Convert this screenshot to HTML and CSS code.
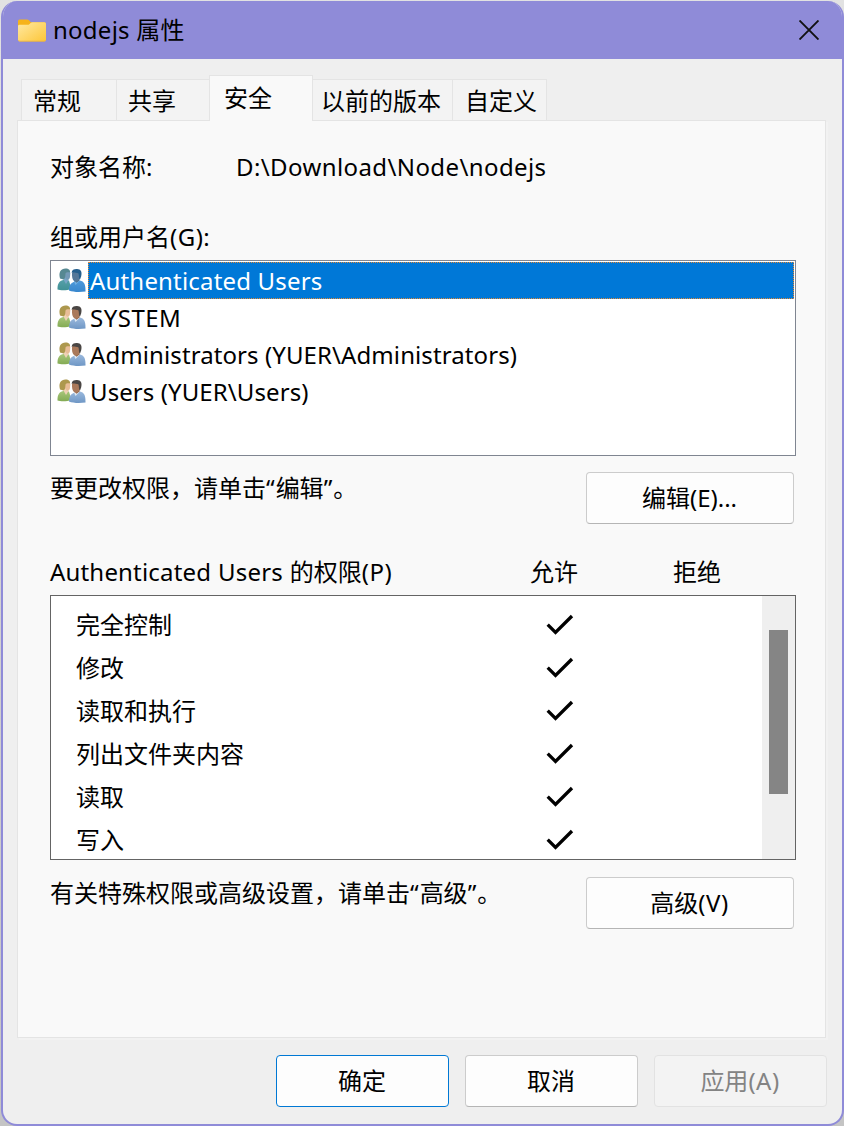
FILE: index.html
```html
<!DOCTYPE html>
<html lang="zh-CN">
<head>
<meta charset="utf-8">
<title>nodejs 属性</title>
<link rel="stylesheet" href="styles.css">
</head>
<body>
<svg class="defs" width="0" height="0">
  <defs>
    <filter id="selection-tint" color-interpolation-filters="sRGB"><feColorMatrix values=".5 0 0 0 0  0 .5 0 0 .235  0 0 .5 0 .42  0 0 0 1 0"/></filter>
    <linearGradient id="folder-front" x1="0" y1="0" x2="1" y2="1"><stop offset="0" stop-color="#ffe9a3"/><stop offset="1" stop-color="#fdc638"/></linearGradient>
    <linearGradient id="blue-coat" x1="0" y1="0" x2="0" y2="1"><stop offset="0" stop-color="#9bb9dd"/><stop offset="1" stop-color="#6f97c5"/></linearGradient>
    <linearGradient id="green-coat" x1="0" y1="0" x2="0" y2="1"><stop offset="0" stop-color="#a9c77c"/><stop offset="1" stop-color="#83ab54"/></linearGradient>
    <symbol id="people" viewBox="0 0 29 25">
      <path d="M.5 20.500C.5 15 2.500 12.800 7 11.700L12 12.500 14.500 21C10 22.600 3.500 22.600.5 21.500Z" fill="url(#green-coat)"/>
      <path d="M6.500 11.500 9 16 11.500 12 11 8H7Z" fill="#efd2b5"/>
      <path d="M7 4C8 1.800 13 2 13.300 5L13 9C12.500 11.500 11 12.200 9.500 11.300L7 8Z" fill="#e8bd98"/>
      <path d="M3 10.500C1.300 4 4 .6 8.500.6 11.500.5 13.500 2.300 13 4.300 11 4.300 9.500 3.800 8.500 5.500 8.300 8 8.500 10.300 6.500 11.500Z" fill="#ad984e"/>
      <path d="M12 22.500C12 17.500 13.800 14.800 18 13.500L23 12.500C27 13.500 28.600 16 28.500 23.500 22 24.400 16 24 12 22.500Z" fill="url(#blue-coat)"/>
      <path d="M17 13.500 18.500 17 22 13.500 22 10H18Z" fill="#dfe8f2"/>
      <path d="M18 13 19.500 14.700 22.500 12.500V9H18Z" fill="#916345"/>
      <path d="M15 5C15.500 2.500 22 2 23 5V9.500C22 13.500 19 14.600 17 13 15.500 12 14.700 8.500 15 5Z" fill="#aa795b"/>
      <path d="M14.600 4.800C14.800 2 17 1 20 1.100 24 1.200 25.300 4 24.200 8.300L23 11.500C21.500 10.500 22.300 7 21.300 5.200 19 5 16.500 3.800 14.600 4.800Z" fill="#4a4644"/>
    </symbol>
    <symbol id="tick" viewBox="0 0 28 22"><path d="M1.700 10.700 9.500 18.500 26 2" fill="none" stroke="#000" stroke-width="3.300"/></symbol>
  </defs>
</svg>
<main class="window">
  <header class="titlebar">
    <svg class="folder" width="28" height="23" viewBox="0 0 28 23"><path d="M0 2Q0 .4 1.600.4H9Q10.200.4 11 1.300L12.800 3.200H26.400Q28 3.200 28 4.800V12H0Z" fill="#f6b31b"/><path d="M0 7.200Q0 5.800 1.500 5.800H9.500Q10.700 5.800 11.600 4.900L12.600 3.900Q13.300 3.200 14.500 3.200H26.500Q28 3.200 28 4.800V20.800Q28 22.400 26.400 22.400H1.600Q0 22.400 0 20.800Z" fill="url(#folder-front)"/><path d="M.4 21.200Q.8 22.200 2 22.200H26Q27.200 22.200 27.600 21.200" fill="none" stroke="#e9ad38" stroke-width=".7"/></svg>
    <h1 class="title">nodejs 属性</h1>
    <svg class="close" width="20" height="20" viewBox="0 0 20 20"><path d="M.5.5 19.500 19.500M19.500.5.5 19.500" stroke="#111" stroke-width="1.900"/></svg>
  </header>
  <nav class="tabs">
    <span class="tab general">常规</span>
    <span class="tab sharing">共享</span>
    <span class="tab active">安全</span>
    <span class="tab versions">以前的版本</span>
    <span class="tab custom">自定义</span>
  </nav>
  <section class="panel">
    <div class="object-row"><span class="object-label">对象名称:</span><span class="path">D:\Download\Node\nodejs</span></div>
    <div class="group-label">组或用户名<span class="key">(G):</span></div>
    <ul class="users">
      <li class="user selected"><span class="avatar"><svg width="29" height="25"><use href="#people"/></svg></span><span class="user-name authenticated">Authenticated Users</span></li>
      <li class="user"><span class="avatar"><svg width="29" height="25"><use href="#people"/></svg></span><span class="user-name system">SYSTEM</span></li>
      <li class="user"><span class="avatar"><svg width="29" height="25"><use href="#people"/></svg></span><span class="user-name admins">Administrators (YUER\Administrators)</span></li>
      <li class="user"><span class="avatar"><svg width="29" height="25"><use href="#people"/></svg></span><span class="user-name admins">Users (YUER\Users)</span></li>
    </ul>
    <div class="action-row"><span>要更改权限，请单击<span class="quote">“</span>编辑<span class="quote">”</span>。</span><button class="button wide">编辑(E)...</button></div>
    <div class="perm-head"><span class="perm-title"><span class="authenticated">Authenticated Users</span> 的权限<span class="key">(P)</span></span><span class="allow">允许</span><span class="deny">拒绝</span></div>
    <div class="permissions">
      <ul class="perm-list">
        <li class="perm"><span>完全控制</span><svg class="tick"><use href="#tick"/></svg></li>
        <li class="perm"><span>修改</span><svg class="tick"><use href="#tick"/></svg></li>
        <li class="perm"><span>读取和执行</span><svg class="tick"><use href="#tick"/></svg></li>
        <li class="perm"><span>列出文件夹内容</span><svg class="tick"><use href="#tick"/></svg></li>
        <li class="perm"><span>读取</span><svg class="tick"><use href="#tick"/></svg></li>
        <li class="perm"><span>写入</span><svg class="tick"><use href="#tick"/></svg></li>
      </ul>
      <div class="scrollbar"><div class="thumb"></div></div>
    </div>
    <div class="action-row advanced"><span>有关特殊权限或高级设置，请单击<span class="quote">“</span>高级<span class="quote">”</span>。</span><button class="button wide">高级<span class="key">(V)</span></button></div>
  </section>
  <footer class="footer">
    <button class="button default">确定</button>
    <button class="button">取消</button>
    <button class="button" disabled>应用<span class="key">(A)</span></button>
  </footer>
</main>
</body>
</html>
```
FILE: styles.css
```css
* { box-sizing: border-box; }
body {
  margin: 0;
  padding: 1px 0 0 1px;
  height: 1126px;
  overflow: hidden;
  background: linear-gradient(#e2e2e2, #c4c4c4);
  color: #000;
  font: 24px/36px "Noto Sans", "Noto Sans CJK SC", sans-serif;
  white-space: nowrap;
}
.defs { position: absolute; }
ul { list-style: none; margin: 0; padding: 0; }
.window {
  width: 843px;
  height: 1125px;
  border: 2px solid #8f8bd8;
  border-top: 0;
  border-radius: 16px;
  background: #efefef;
  overflow: hidden;
}
.titlebar {
  display: flex;
  align-items: center;
  height: 58px;
  padding: 0 23px 0 15px;
  background: #8f8bd8;
}
.folder { margin-right: 7px; }
.title { margin: 0; font-size: 24px; font-weight: 400; flex: 1; letter-spacing: .25px; }
.tabs {
  display: flex;
  align-items: flex-end;
  height: 61px;
  padding-left: 18px;
}
.tab {
  height: 41px;
  padding: 3px 0 0 11px;
  border: 1px solid #e4e4e4;
  border-width: 1px 1px 0 0;
  background: #f3f3f3;
}
.general { width: 96px; border-left-width: 1px; }
.sharing { width: 92px; border-right: 0; }
.active {
  width: 104px;
  height: 46px;
  margin-bottom: -1px;
  padding: 4px 0 0 14px;
  border-left-width: 1px;
  background: #f9f9f9;
  z-index: 1;
}
.versions { width: 140px; padding-left: 8px; }
.custom { width: 94px; padding-left: 12px; }
.panel {
  width: 809px;
  height: 918px;
  margin-left: 14px;
  padding: 28px 29px 0 32px;
  border: 1px solid #e4e4e4;
  background: #f9f9f9;
  box-shadow: 2px 2px 0 #f2f2f2;
}
.object-row { display: flex; }
.object-label { width: 186px; }
.path { letter-spacing: .4px; }
.key { letter-spacing: .5px; }
.group-label { margin-top: 34px; }
.users {
  height: 196px;
  margin-top: 5px;
  padding: 1px;
  border: 1px solid #7f8591;
  background: #fff;
}
.user { display: flex; height: 37px; }
.avatar { width: 36px; padding: 6px 0 0 5px; }
.avatar svg { display: block; }
.user-name { flex: 1; padding-left: 2px; line-height: 38px; }
.authenticated { letter-spacing: .18px; }
.system { letter-spacing: .5px; }
.admins { letter-spacing: .09px; }
.selected .user-name { background: #0078d7; color: #fff; outline: 1px dotted #e78a35; outline-offset: -1px; }
.selected .avatar svg { filter: url(#selection-tint); }
.action-row { display: flex; justify-content: space-between; height: 52px; margin: 16px 2px 0 0; }
.action-row > span { margin-top: -2px; }
.quote { letter-spacing: 1px; }
.button {
  width: 173px;
  height: 52px;
  padding: 0 1px 0 0;
  border: 1px solid #ccc;
  border-bottom-color: #b5b5b5;
  border-radius: 4px;
  background: #fdfdfd;
  color: #000;
  font: inherit;
}
.wide { width: 208px; }
.default { border-color: #0078d4; }
.button:disabled { background: #f3f3f3; border-color: #e2e2e2; color: #838383; }
.perm-head { display: flex; margin-top: 30px; }
.perm-title { width: 480px; word-spacing: .5px; }
.allow { width: 143px; }
.permissions {
  display: flex;
  height: 265px;
  margin-top: 5px;
  border: 1px solid #646464;
  background: #fff;
}
.perm-list { width: 711px; padding: 7px 0 0 25px; }
.perm { display: flex; align-items: center; height: 43px; }
.perm span { width: 470px; }
.tick { width: 28px; height: 22px; }
.scrollbar { flex: 1; padding: 34px 7px 0; background: #efefef; }
.thumb { height: 164px; background: #858585; }
.advanced { margin-top: 17px; }
.footer { display: flex; gap: 16px; padding: 17px 0 0 273px; }
```
